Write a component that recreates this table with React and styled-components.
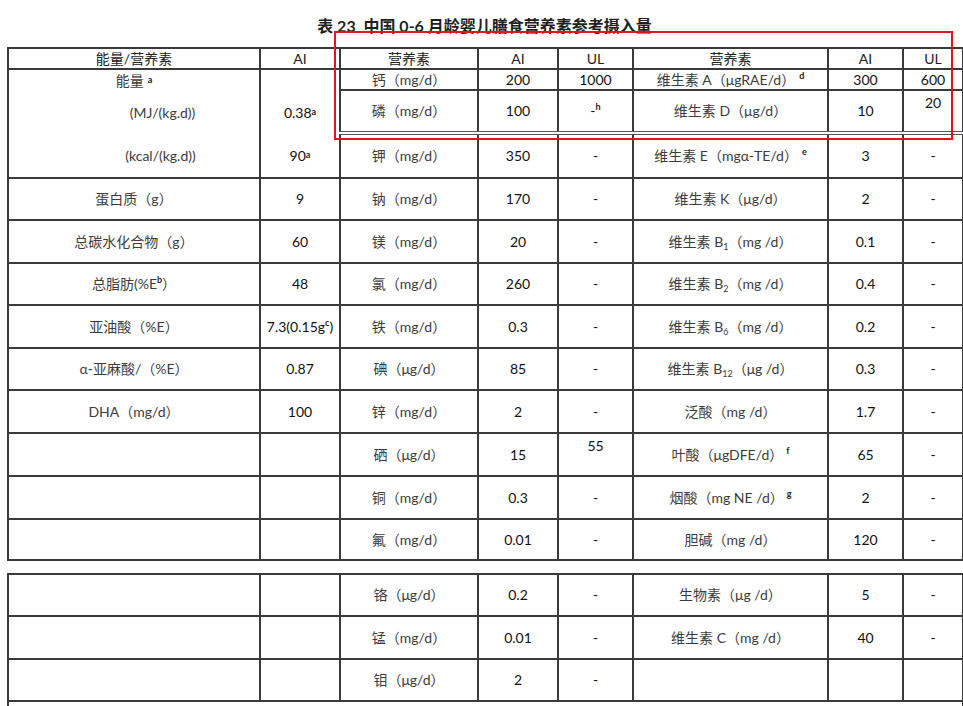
import React from "react";
import styled, { createGlobalStyle } from "styled-components";

const GlobalStyle = createGlobalStyle`
  html, body {
    margin: 0;
    padding: 0;
    background: #ffffff;
    overflow: hidden;
  }
  body {
    font-family: Lato, "Noto Sans CJK SC", sans-serif;
    color: #2a2a2a;
  }
`;

const Page = styled.div`
  position: relative;
  width: 963px;
  height: 706px;
  overflow: hidden;
  padding-left: 7px;
  box-sizing: border-box;
`;

const Title = styled.h1`
  width: 955px;
  height: 47px;
  margin: 0;
  display: flex;
  align-items: center;
  justify-content: center;
  padding-top: 2px;
  box-sizing: border-box;
  font-size: 16px;
  font-weight: 700;
  color: #1f1f1f;
`;

const Table = styled.table`
  width: 955px;
  table-layout: fixed;
  border-collapse: collapse;
  border: 2px solid #3a3a3a;
  margin-bottom: ${(p) => p.$gap || 0}px;
`;

const Row = styled.tr`
  height: ${(p) => p.$h}px;
`;

const Head = styled.th`
  border: 2px solid #3a3a3a;
  padding: 0;
  font-size: 14px;
  line-height: 16px;
  font-weight: 400;
  color: #222;
  text-align: center;
  vertical-align: middle;
`;

const Cell = styled.td`
  border: 2px solid #3a3a3a;
  border-bottom: ${(p) => (p.$double ? "4px double #555" : "2px solid #3a3a3a")};
  padding: ${(p) => (p.$top ? "4px 0 0" : "0")};
  font-size: 14px;
  line-height: 16px;
  color: ${(p) => (p.$num ? "#111" : "#3c3c3c")};
  text-align: center;
  vertical-align: ${(p) => (p.$top ? "top" : "middle")};
  white-space: nowrap;
`;

const Stack = styled.div`
  display: grid;
  grid-template-rows: 21px 43px 43px;
  height: 107px;
`;

const Line = styled.div`
  display: flex;
  align-items: center;
  justify-content: center;
  padding-left: ${(p) => p.$indent || 0}px;
`;

const Sup = styled.sup`
  font-size: 9px;
  line-height: 9px;
  font-weight: 700;
  color: #222;
  vertical-align: top;
  position: relative;
  top: -1px;
  margin-left: ${(p) => p.$gap || 0}px;
`;

const Sub = styled.sub`
  font-size: 9px;
  line-height: 9px;
  vertical-align: baseline;
  position: relative;
  top: 3px;
`;

const Note = styled.td`
  border: 2px solid #3a3a3a;
  padding: 2px 4px 0;
  font-size: 14px;
  color: #222;
  vertical-align: top;
  white-space: nowrap;
  height: 30px;
`;

const RedBox = styled.div`
  position: absolute;
  left: 334px;
  top: 31px;
  width: 615px;
  height: 105px;
  border: 2px solid #e2141c;
  pointer-events: none;
`;

const Cols = () => (
  <colgroup>
    <col style={{ width: 252 }} />
    <col style={{ width: 80 }} />
    <col style={{ width: 138 }} />
    <col style={{ width: 80 }} />
    <col style={{ width: 75 }} />
    <col style={{ width: 195 }} />
    <col style={{ width: 75 }} />
    <col style={{ width: 60 }} />
  </colgroup>
);

const mainRows = [
  { h: 42, l: "蛋白质（g）", la: "9", m: "钠（mg/d）", ai: "170", ul: "-", v: "维生素 K（μg/d）", vai: "2", vul: "-" },
  { h: 43, l: "总碳水化合物（g）", la: "60", m: "镁（mg/d）", ai: "20", ul: "-", v: <>维生素 B<Sub>1</Sub>（mg /d）</>, vai: "0.1", vul: "-" },
  { h: 42, l: <>总脂肪(%E<Sup>b</Sup>）</>, la: "48", m: "氯（mg/d）", ai: "260", ul: "-", v: <>维生素 B<Sub>2</Sub>（mg /d）</>, vai: "0.4", vul: "-" },
  { h: 43, l: "亚油酸（%E）", la: <>7.3(0.15g<Sup>c</Sup>)</>, m: "铁（mg/d）", ai: "0.3", ul: "-", v: <>维生素 B<Sub>6</Sub>（mg /d）</>, vai: "0.2", vul: "-" },
  { h: 42, l: "α-亚麻酸/（%E）", la: "0.87", m: "碘（μg/d）", ai: "85", ul: "-", v: <>维生素 B<Sub>12</Sub>（μg /d）</>, vai: "0.3", vul: "-" },
  { h: 43, l: "DHA（mg/d）", la: "100", m: "锌（mg/d）", ai: "2", ul: "-", v: "泛酸（mg /d）", vai: "1.7", vul: "-" },
  { h: 43, l: "", la: "", m: "硒（μg/d）", ai: "15", ul: "55", ulTop: true, v: <>叶酸（μgDFE/d）<Sup $gap={3}>f</Sup></>, vai: "65", vul: "-" },
  { h: 43, l: "", la: "", m: "铜（mg/d）", ai: "0.3", ul: "-", v: <>烟酸（mg NE /d）<Sup $gap={3}>g</Sup></>, vai: "2", vul: "-" },
  { h: 41, l: "", la: "", m: "氟（mg/d）", ai: "0.01", ul: "-", v: "胆碱（mg /d）", vai: "120", vul: "-" },
];

const extraRows = [
  { h: 42, m: "铬（μg/d）", ai: "0.2", ul: "-", v: "生物素（μg /d）", vai: "5", vul: "-" },
  { h: 43, m: "锰（mg/d）", ai: "0.01", ul: "-", v: "维生素 C（mg /d）", vai: "40", vul: "-" },
  { h: 42, m: "钼（μg/d）", ai: "2", ul: "-", v: "", vai: "", vul: "" },
];

const RightCells = ({ r }) => (
  <>
    <Cell>{r.m}</Cell>
    <Cell $num>{r.ai}</Cell>
    <Cell $num $top={r.ulTop}>{r.ul}</Cell>
    <Cell>{r.v}</Cell>
    <Cell $num>{r.vai}</Cell>
    <Cell $num>{r.vul}</Cell>
  </>
);

export default function App() {
  return (
    <Page>
      <GlobalStyle />
      <Title>表 23&nbsp; 中国 0-6 月龄婴儿膳食营养素参考摄入量</Title>

      <Table $gap={12}>
        <Cols />
        <thead>
          <Row $h={21}>
            <Head>能量/营养素</Head>
            <Head>AI</Head>
            <Head>营养素</Head>
            <Head>AI</Head>
            <Head>UL</Head>
            <Head>营养素</Head>
            <Head>AI</Head>
            <Head>UL</Head>
          </Row>
        </thead>
        <tbody>
          <Row $h={21}>
            <Cell rowSpan={3}>
              <Stack>
                <Line>能量<Sup $gap={4}>a</Sup></Line>
                <Line $indent={57}>(MJ/(kg.d))</Line>
                <Line $indent={53}>(kcal/(kg.d))</Line>
              </Stack>
            </Cell>
            <Cell rowSpan={3} $num>
              <Stack>
                <Line />
                <Line>0.38<Sup>a</Sup></Line>
                <Line>90<Sup>a</Sup></Line>
              </Stack>
            </Cell>
            <Cell>钙（mg/d）</Cell>
            <Cell $num>200</Cell>
            <Cell $num>1000</Cell>
            <Cell>维生素 A（μgRAE/d）<Sup $gap={4}>d</Sup></Cell>
            <Cell $num>300</Cell>
            <Cell $num>600</Cell>
          </Row>
          <Row $h={42}>
            <Cell $double>磷（mg/d）</Cell>
            <Cell $double $num>100</Cell>
            <Cell $double $num>-<Sup>h</Sup></Cell>
            <Cell $double>维生素 D（μg/d）</Cell>
            <Cell $double $num>10</Cell>
            <Cell $double $num $top>20</Cell>
          </Row>
          <Row $h={44}>
            <Cell>钾（mg/d）</Cell>
            <Cell $num>350</Cell>
            <Cell $num>-</Cell>
            <Cell>维生素 E（mgα-TE/d）<Sup $gap={4}>e</Sup></Cell>
            <Cell $num>3</Cell>
            <Cell $num>-</Cell>
          </Row>
          {mainRows.map((r, i) => (
            <Row key={i} $h={r.h}>
              <Cell>{r.l}</Cell>
              <Cell $num>{r.la}</Cell>
              <RightCells r={r} />
            </Row>
          ))}
        </tbody>
      </Table>

      <Table>
        <Cols />
        <tbody>
          {extraRows.map((r, i) => (
            <Row key={i} $h={r.h}>
              <Cell />
              <Cell />
              <RightCells r={r} />
            </Row>
          ))}
          <tr>
            <Note colSpan={8}>
              注：a AI，适宜摄入量；UL，可耐受最高摄入量；b %E 为占能量的百分比；c 为花生四烯酸（ARA）的量；d 视黄醇活性当量；h 未制定参考值者用“-”表示。
            </Note>
          </tr>
        </tbody>
      </Table>

      <RedBox />
    </Page>
  );
}
